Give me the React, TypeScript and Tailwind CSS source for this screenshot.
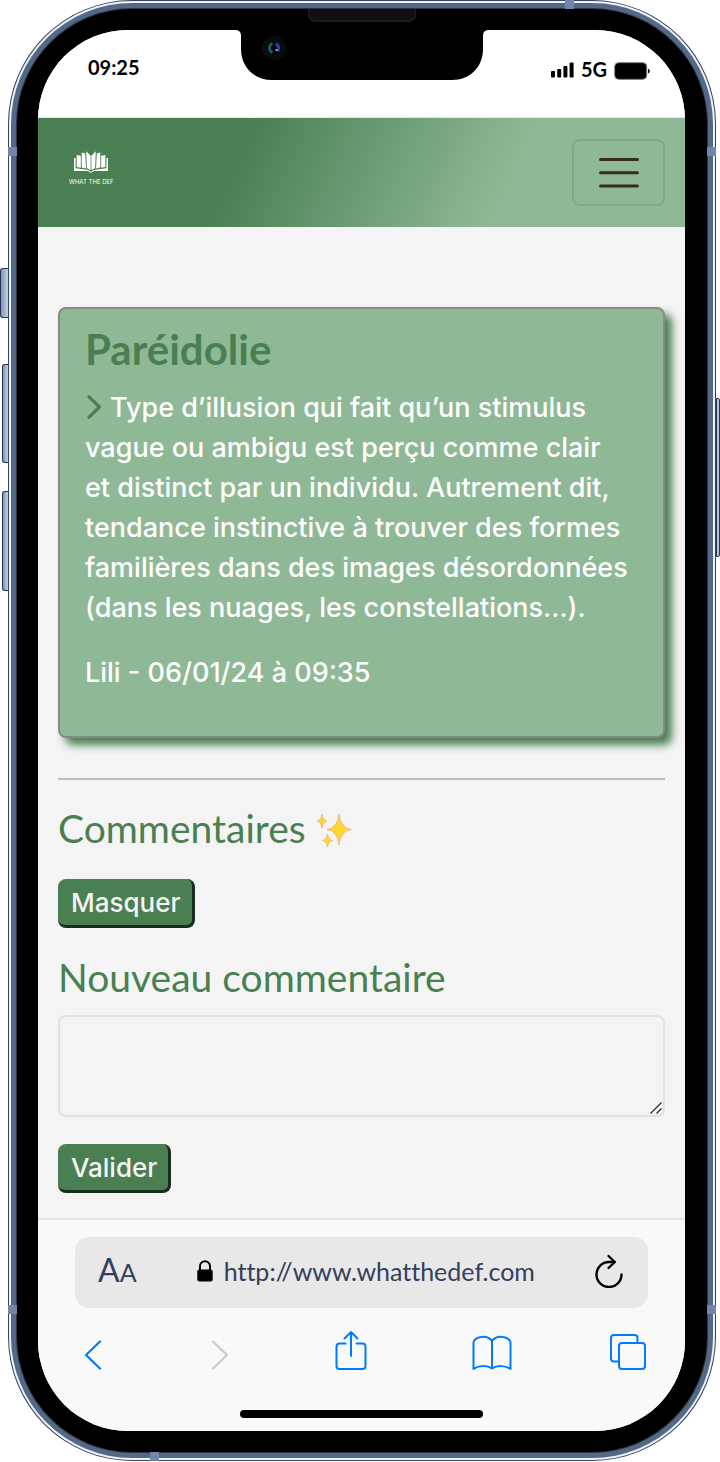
import React from "react";

function Notch() {
  return (
    <div className="relative h-[50px] w-[254px] shrink-0">
      <svg className="block h-full w-full" viewBox="0 0 254 50" aria-hidden="true">
        <path
          d="M0 0 C4 0 6 2 6 6 V19 C6 37 19 50 37 50 H217 C235 50 248 37 248 19 V6 C248 2 250 0 254 0 Z"
          fill="#000"
        />
        <circle cx="39" cy="18" r="12" fill="#0c0c0d" />
        <circle cx="39" cy="18" r="6.500" fill="#05070d" />
        <path d="M37.500 13.500 A4.800 4.800 0 0 0 37.500 22.500" stroke="#2b5a6d" strokeWidth="2.500" fill="none" />
        <path d="M41 13.500 Q45 16.500 43 21.500" stroke="#2a3fa8" strokeWidth="3" fill="none" />
        <circle cx="41.500" cy="20" r="1.100" fill="#b9c6ff" />
      </svg>
    </div>
  );
}

function StatusBar() {
  return (
    <div className="grid h-[88px] grid-cols-[1fr_auto_1fr] items-start border-b border-[#e3e6e3] bg-white font-['Lato','Open_Sans',sans-serif] text-black">
      <div className="pt-[23px] pl-[50px] text-[20px] leading-7 font-bold">09:25</div>
      <Notch />
      <div className="flex items-center justify-end gap-[7px] pt-[25px] pr-[35px]">
        <svg className="mt-px h-4 w-[23px]" viewBox="0 0 23 16" aria-hidden="true">
          <rect x="0" y="9" width="4" height="6.500" rx="1" />
          <rect x="6.200" y="7" width="4" height="8.500" rx="1" />
          <rect x="12.400" y="4" width="4" height="11.500" rx="1" />
          <rect x="18.600" y="0.500" width="4" height="15" rx="1" />
        </svg>
        <span className="text-[20px] leading-7 font-bold">5G</span>
        <svg className="mt-1 h-[18px] w-9" viewBox="0 0 36 18" aria-hidden="true">
          <rect x="0.700" y="0.700" width="32" height="16.600" rx="4" stroke="#777" />
          <path d="M34 6.500 Q35.800 7.500 35.800 9 Q35.800 10.500 34 11.500 Z" />
        </svg>
      </div>
    </div>
  );
}

function BookHalf() {
  return (
    <g>
      <path d="M0 7 H1.600 V17.200 L13 18.800 Q15.500 19.300 17 21 V22 L14 20 H0 Z" />
      <path d="M2.700 4 L6.800 4.800 V16.800 L2.700 16 Z" />
      <path d="M7.700 1.500 L11.200 2.600 L12 17.600 L7.700 16.500 Z" />
      <path d="M12.200 0.200 L16.600 4.800 V19 L12.900 17.200 Z" />
    </g>
  );
}

function SiteHeader() {
  return (
    <header className="flex h-[109px] items-center justify-between bg-[linear-gradient(115deg,#4a7f52_31%,#8fb996_72%)] pr-5 pl-[31px]">
      <a href="#accueil" className="flex flex-col items-center gap-[5px] pb-[9px] text-white">
        <svg className="h-[22px] w-[34px]" viewBox="0 0 34 22" fill="#fff" aria-hidden="true">
          <BookHalf />
          <g transform="translate(34 0) scale(-1 1)">
            <BookHalf />
          </g>
        </svg>
        <span className="font-['Inter',sans-serif] text-[6px] leading-2 whitespace-nowrap">WHAT THE DEF</span>
      </a>
      <button
        type="button"
        aria-label="Menu"
        className="flex h-[67px] w-[93px] items-center justify-center rounded-lg border-2 border-[#80a887]"
      >
        <svg className="h-8 w-10" viewBox="0 0 40 32" stroke="#332d26" strokeWidth="3" strokeLinecap="round" aria-hidden="true">
          <path d="M1.500 2.500 H38.500 M1.500 15.800 H38.500 M1.500 29 H38.500" />
        </svg>
      </button>
    </header>
  );
}

const lines = [
  "Type d’illusion qui fait qu’un stimulus",
  "vague ou ambigu est perçu comme clair",
  "et distinct par un individu. Autrement dit,",
  "tendance instinctive à trouver des formes",
  "familières dans des images désordonnées",
  "(dans les nuages, les constellations...).",
];

function DefinitionCard() {
  return (
    <article className="rounded-lg border-2 border-[#868986] bg-[#8fb996] px-[25px] pt-[18px] pb-[43px] text-white shadow-[7px_7px_8px_#4a7f52]">
      <h1 className="font-['Lato','Open_Sans',sans-serif] text-[42px] leading-[44px] font-bold text-[#4a7f52]">
        Paréidolie
      </h1>
      <p className="mt-[17px] text-[27px] leading-10 font-medium whitespace-nowrap">
        <svg className="mr-2 inline-block h-6 w-[17px] align-[-2px]" viewBox="0 0 17 24" fill="none" stroke="#4a7f52" strokeWidth="3.200" strokeLinecap="round" strokeLinejoin="round" aria-hidden="true">
          <path d="M4 1.800 L14.500 12 L4 22.200" />
        </svg>
        {lines.map((line, i) => (
          <React.Fragment key={line}>
            {i > 0 && <br />}
            {line}
          </React.Fragment>
        ))}
      </p>
      <p className="mt-[25px] text-[27px] leading-10 font-medium">Lili - 06/01/24 à 09:35</p>
    </article>
  );
}

function Sparkles() {
  return (
    <svg className="inline-block h-9 w-9 align-[-5px]" viewBox="0 0 36 36" role="img" aria-label="Étincelles">
      <g fill="#fcd535" stroke="#f6a76a" strokeWidth="0.700" strokeLinejoin="round">
        <path d="M23 2 Q24.400 16 35.500 17.500 Q24.400 19 23 33 Q21.600 19 11 17.500 Q21.600 16 23 2 Z" />
        <path d="M6 2 Q6.800 8 11 9 Q6.800 10 6 16 Q5.200 10 1 9 Q5.200 8 6 2 Z" />
        <path d="M11.500 22 Q12.300 27.500 16.500 28.500 Q12.300 29.500 11.500 35 Q10.700 29.500 6.500 28.500 Q10.700 27.500 11.500 22 Z" />
      </g>
    </svg>
  );
}

const actionButton =
  "block h-[49px] rounded-lg border-r-[3px] border-b-[3px] border-[#1b2b1d] bg-[#4a7f52] pt-0.5 pr-[11px] pl-[13px] text-[26px] leading-9 font-medium text-[#f4f4f4]";
const sectionTitle = "font-['Lato','Open_Sans',sans-serif] text-[39px] leading-[44px] text-[#4a7f52]";

function Comments() {
  return (
    <section>
      <h2 className={`${sectionTitle} mt-[26px]`}>
        Commentaires <Sparkles />
      </h2>
      <button type="button" className={`${actionButton} mt-[29px]`}>
        Masquer
      </button>
      <form onSubmit={(e) => e.preventDefault()}>
        <label htmlFor="comment" className={`${sectionTitle} mt-[27px] block`}>
          Nouveau commentaire
        </label>
        <div className="relative mt-4">
          <textarea
            id="comment"
            className="block h-[102px] w-full resize-none rounded-lg border-2 border-[#dee2e6] bg-transparent px-5 py-2 text-[26px]"
          />
          <svg className="absolute right-[3px] bottom-[3px] h-3 w-3" viewBox="0 0 12 12" stroke="#333" strokeWidth="1.400" aria-hidden="true">
            <path d="M0.500 11.500 L11.500 0.500 M6.500 11.500 L11.500 6.500" />
          </svg>
        </div>
        <button type="submit" className={`${actionButton} mt-[27px]`}>
          Valider
        </button>
      </form>
    </section>
  );
}

function BrowserBar() {
  return (
    <footer className="border-t-2 border-[#e3e3e3] bg-[#f9f9f9] pt-[17px] pb-[13px] font-['Lato','Open_Sans',sans-serif]">
      <div className="mx-[37px] flex h-[71px] items-center justify-between rounded-[14px] bg-[#e8e8e8] pr-[25px] pb-1 pl-[23px] text-[#333f5c]">
        <button type="button" aria-label="Taille du texte" className="pt-1 leading-8">
          <span className="text-[32px]">A</span>
          <span className="text-[25px]">A</span>
        </button>
        <div className="flex items-center gap-[11px]">
          <svg className="h-[22px] w-4" viewBox="0 0 16 22" aria-hidden="true">
            <rect x="0.300" y="9.500" width="15.400" height="12" rx="2" />
            <path d="M3 11 V6.200 a5 5 0 0 1 10 0 V11" fill="none" stroke="#000" strokeWidth="2" />
          </svg>
          <a href="#accueil" className="text-[25px] leading-8 [font-variant-ligatures:none]">
            http://www.whatthedef.com
          </a>
        </div>
        <button type="button" aria-label="Recharger">
          <svg className="block h-[34px] w-7" viewBox="0 0 28 34" fill="none" stroke="#000" strokeWidth="2.400" strokeLinecap="round" strokeLinejoin="round" aria-hidden="true">
            <path d="M26.500 20.500 A12.500 12.500 0 1 1 14 8 H19.500" />
            <path d="M13.500 2 L19.800 8 L13.500 14" />
          </svg>
        </button>
      </div>
      <nav className="mt-5 mb-[38px] flex h-11 items-center justify-between pr-[39px] pl-[46px] text-[#007aff]">
        <div className="flex items-center gap-[109px]">
          <button type="button" aria-label="Précédent">
            <svg className="mt-2.5 block h-[30px] w-[18px]" viewBox="0 0 18 30" fill="none" stroke="currentColor" strokeWidth="2.200" strokeLinecap="round" strokeLinejoin="round">
              <path d="M16 1.500 L2 15 L16 28.500" />
            </svg>
          </button>
          <button type="button" aria-label="Suivant" className="text-[#c9c9c9]">
            <svg className="mt-2.5 block h-[30px] w-[18px]" viewBox="0 0 18 30" fill="none" stroke="currentColor" strokeWidth="2.200" strokeLinecap="round" strokeLinejoin="round">
              <path d="M2 1.500 L16 15 L2 28.500" />
            </svg>
          </button>
        </div>
        <button type="button" aria-label="Partager">
          <svg className="block h-10 w-8" viewBox="0 0 32 40" fill="none" stroke="currentColor" strokeWidth="2" strokeLinecap="round" strokeLinejoin="round">
            <path d="M10.500 13.500 H4.500 Q1.500 13.500 1.500 16.500 V36 Q1.500 39 4.500 39 H27.500 Q30.500 39 30.500 36 V16.500 Q30.500 13.500 27.500 13.500 H21.500" />
            <path d="M16 26 V2 M9.500 8.500 L16 2 L22.500 8.500" />
          </svg>
        </button>
        <div className="flex items-center gap-[98px]">
          <button type="button" aria-label="Signets">
            <svg className="mt-1.5 block h-9 w-10" viewBox="0 0 40 36" fill="none" stroke="currentColor" strokeWidth="2" strokeLinejoin="round">
              <path d="M20 6 C17 2 12 1.500 9 2 C5 2.500 2.500 4.500 1.500 7 V34 C6 30.500 15 30 20 33.500 C25 30 34 30.500 38.500 34 V7 C37.500 4.500 35 2.500 31 2 C28 1.500 23 2 20 6 Z M20 6 V33.500" />
            </svg>
          </button>
          <button type="button" aria-label="Onglets">
            <svg className="mt-1 block h-9 w-9" viewBox="0 0 36 36" fill="none" stroke="currentColor" strokeWidth="2" strokeLinejoin="round">
              <rect x="9" y="9" width="26" height="26" rx="3" />
              <path d="M27.500 9 V4 Q27.500 1 24.500 1 H4 Q1 1 1 4 V24.500 Q1 27.500 4 27.500 H9" />
            </svg>
          </button>
        </div>
      </nav>
      <div className="mx-auto h-2 w-[243px] rounded-full bg-black" />
    </footer>
  );
}

const band = "absolute bg-[#7485ab]";
const leftKey =
  "absolute right-full rounded-l-[3px] border border-r-0 border-[#26344f] bg-[linear-gradient(90deg,#7f97bb,#c3d0e4)]";

export default function App() {
  return (
    <div className="bg-white pr-1 pb-px pl-2 font-['Inter','Open_Sans',sans-serif]">
      <div className="relative rounded-[124px] bg-[#36445c] p-px">
        <span className={`${leftKey} top-[268px] h-[50px] w-2`} />
        <span className={`${leftKey} top-[364px] h-[99px] w-1.5`} />
        <span className={`${leftKey} top-[491px] h-[100px] w-1.5`} />
        <span className="absolute top-[398px] left-full h-[159px] w-1 rounded-r-[2px] border border-[#26344f] bg-[#b4c4dc]" />
        <div className="rounded-[123px] bg-[#eef3f9] p-0.5">
          <div className="rounded-[121px] bg-[#536987] p-[5px]">
            <div className="rounded-[116px] bg-[#2e3540] p-px">
              <div className="rounded-[115px] bg-black py-[21px] pr-[22px] pl-[21px]">
                <div className="overflow-hidden rounded-[90px] bg-[#f4f4f4]">
                  <StatusBar />
                  <SiteHeader />
                  <main className="px-5 pt-20 pb-[25px]">
                    <DefinitionCard />
                    <hr className="mt-10 border-t-2 border-[#bdbdbd]" />
                    <Comments />
                  </main>
                  <BrowserBar />
                </div>
              </div>
            </div>
          </div>
        </div>
        <span className={`${band} top-[147px] left-0 h-[9px] w-[9px]`} />
        <span className={`${band} top-[147px] right-0 h-[9px] w-[9px]`} />
        <span className={`${band} bottom-[147px] left-0 h-[9px] w-[9px]`} />
        <span className={`${band} right-0 bottom-[147px] h-[9px] w-[9px]`} />
        <span className={`${band} top-0 right-[142px] h-[9px] w-[9px]`} />
        <span className={`${band} bottom-0 left-[142px] h-[9px] w-[9px]`} />
        <span className="absolute top-[9px] left-1/2 h-[13px] w-[109px] -translate-x-1/2 rounded-b-lg border-2 border-t-0 border-[#1c1c1c] bg-[#101010]" />
      </div>
    </div>
  );
}
